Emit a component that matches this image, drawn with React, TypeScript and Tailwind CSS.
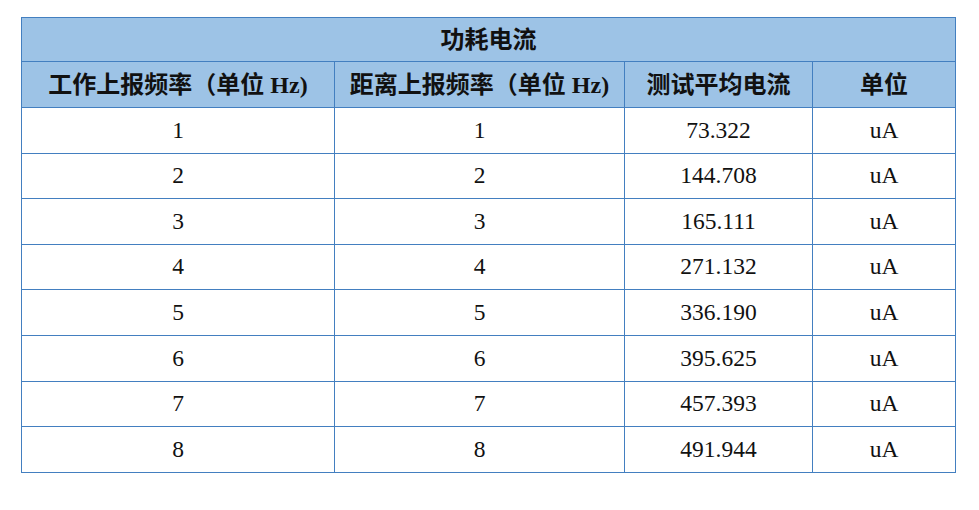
import React from 'react';

const rows = [
  ['1', '1', '73.322'],
  ['2', '2', '144.708'],
  ['3', '3', '165.111'],
  ['4', '4', '271.132'],
  ['5', '5', '336.190'],
  ['6', '6', '395.625'],
  ['7', '7', '457.393'],
  ['8', '8', '491.944'],
];

const cjk = { fontFamily: '"Liberation Serif", "Noto Sans CJK SC", serif' };

export default function App() {
  return (
    <div className="w-[979px] h-[510px] bg-white pt-[17px] pl-[21px]">
      <table
        className="table-fixed border-collapse w-[934px] text-[#111] text-center"
        style={cjk}
      >
        <colgroup>
          <col className="w-[313px]" />
          <col className="w-[290px]" />
          <col className="w-[188px]" />
          <col className="w-[143px]" />
        </colgroup>
        <thead className="bg-[#9dc3e6] font-bold text-[24px]">
          <tr className="h-[44px]">
            <th colSpan={4} className="border border-[#437fc0] font-bold">
              功耗电流
            </th>
          </tr>
          <tr className="h-[46px]">
            <th className="border border-[#437fc0] font-bold">工作上报频率（单位 Hz)</th>
            <th className="border border-[#437fc0] font-bold">距离上报频率（单位 Hz)</th>
            <th className="border border-[#437fc0] font-bold">测试平均电流</th>
            <th className="border border-[#437fc0] font-bold">单位</th>
          </tr>
        </thead>
        <tbody className="text-[23.5px]">
          {rows.map((r) => (
            <tr key={r[0]} className="h-[45.6px]">
              <td className="border border-[#437fc0]">{r[0]}</td>
              <td className="border border-[#437fc0]">{r[1]}</td>
              <td className="border border-[#437fc0]">{r[2]}</td>
              <td className="border border-[#437fc0]">uA</td>
            </tr>
          ))}
        </tbody>
      </table>
    </div>
  );
}
